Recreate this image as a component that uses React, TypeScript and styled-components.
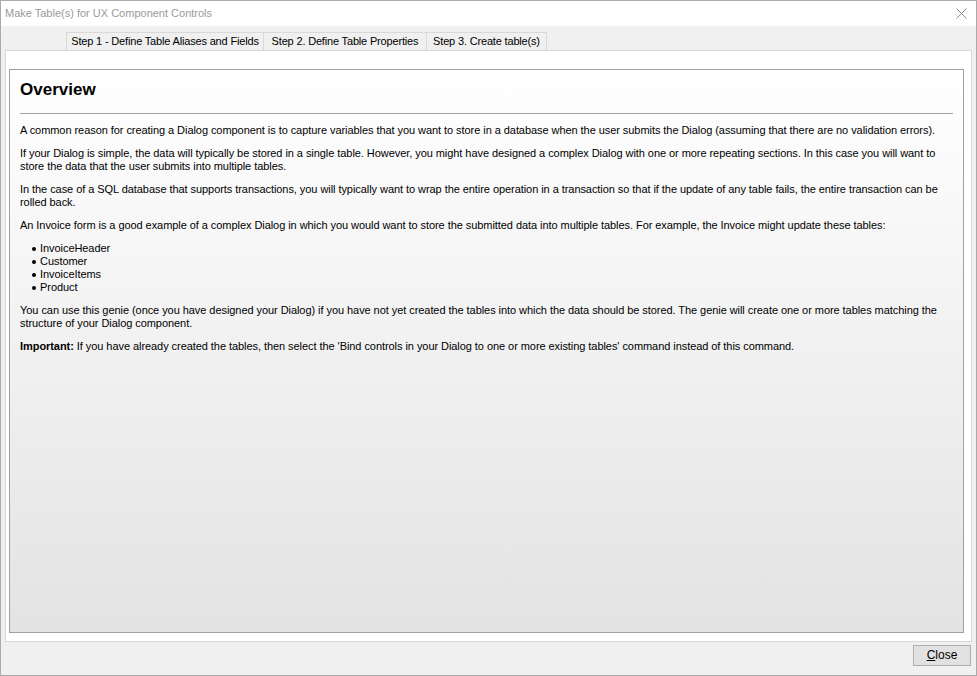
import React from "react";
import styled, { createGlobalStyle } from "styled-components";

const GlobalStyle = createGlobalStyle`
  html, body { margin: 0; padding: 0; background: #ffffff; }
  body { font-family: "Liberation Sans", Arial, sans-serif; font-size: 11px; color: #000; }
  * { box-sizing: border-box; }
`;

const Window = styled.div`
  width: 977px;
  height: 676px;
  border: 1px solid #aaaaaa;
  display: flex;
  flex-direction: column;
  background: #f0f0f0;
`;

const TitleBar = styled.div`
  height: 25px;
  background: #ffffff;
  display: flex;
  align-items: center;
  justify-content: space-between;
  padding: 0 9px 1px 4px;
`;

const TitleText = styled.span`
  font-size: 11px;
  color: #9a9a9a;
  line-height: 13px;
`;

const CloseX = styled.svg`
  width: 11px;
  height: 11px;
  display: block;
`;

const Body = styled.div`
  flex: 1;
  display: flex;
  flex-direction: column;
  padding: 6px 4px 0 4px;
  min-height: 0;
`;

const TabStrip = styled.div`
  display: flex;
  height: 18px;
  padding-left: 61px;
`;

const Tab = styled.div<{ $width: number }>`
  width: ${(p) => p.$width}px;
  height: 18px;
  border: 1px solid #d9d9d9;
  border-bottom: none;
  margin-left: -1px;
  background: #f0f0f0;
  font-size: 11px;
  letter-spacing: -0.17px;
  line-height: 17px;
  text-align: center;
  white-space: nowrap;
  &:first-child { margin-left: 0; }
`;

const Panel = styled.div`
  flex: 1;
  min-height: 0;
  background: #ffffff;
  border: 1px solid #d9d9d9;
  padding: 18px 7px 8px 3px;
  display: flex;
`;

const ContentBox = styled.div`
  flex: 1;
  border: 1px solid #a0a0a0;
  background: linear-gradient(to bottom, #ffffff 0%, #e3e3e3 100%);
  padding: 10px;
`;

const Heading = styled.h1`
  margin: 0;
  font-family: "Liberation Sans", Arial, sans-serif;
  font-size: 17px;
  font-weight: bold;
  line-height: 20px;
`;

const Rule = styled.hr`
  margin: 13px 0 10px 0;
  border: none;
  border-top: 1px solid #a0a0a0;
  height: 0;
`;

const Para = styled.p`
  margin: 0 0 10px 0;
  font-size: 11px;
  line-height: 13px;
  letter-spacing: -0.06px;
`;

const List = styled.ul`
  margin: 0 0 10px 0;
  padding: 0 0 0 12px;
  list-style: none;
`;

const Item = styled.li`
  display: flex;
  align-items: center;
  font-size: 11px;
  line-height: 13px;
  letter-spacing: -0.06px;
`;

const Dot = styled.span`
  width: 4px;
  height: 4px;
  border-radius: 50%;
  background: #000;
  margin-right: 4px;
  margin-top: 1px;
  flex: none;
`;

const Footer = styled.div`
  height: 33px;
  display: flex;
  justify-content: flex-end;
  align-items: flex-start;
  padding: 3px 1px 0 0;
`;

const Button = styled.button`
  width: 58px;
  height: 21px;
  background: #e1e1e1;
  border: 1px solid #adadad;
  font-family: "Liberation Sans", Arial, sans-serif;
  font-size: 12px;
  color: #000;
  padding: 0 0 1px 0;
  line-height: 16px;
  border-radius: 0;
`;

const Underline = styled.span`
  text-decoration: underline;
`;

const tabs = [
  { label: "Step 1 - Define Table Aliases and Fields", width: 198 },
  { label: "Step 2. Define Table Properties", width: 164 },
  { label: "Step 3. Create table(s)", width: 121 },
];

const items = ["InvoiceHeader", "Customer", "InvoiceItems", "Product"];

export default function App() {
  return (
    <>
      <GlobalStyle />
      <Window>
        <TitleBar>
          <TitleText>Make Table(s) for UX Component Controls</TitleText>
          <CloseX viewBox="0 0 11 11">
            <path d="M0.5 0.5 L10.5 10.5 M10.5 0.5 L0.5 10.5" stroke="#8a8a8a" strokeWidth="1" fill="none" />
          </CloseX>
        </TitleBar>
        <Body>
          <TabStrip>
            {tabs.map((t) => (
              <Tab key={t.label} $width={t.width}>
                {t.label}
              </Tab>
            ))}
          </TabStrip>
          <Panel>
            <ContentBox>
              <Heading>Overview</Heading>
              <Rule />
              <Para>
                A common reason for creating a Dialog component is to capture variables that you want to store in a
                database when the user submits the Dialog (assuming that there are no validation errors).
              </Para>
              <Para>
                If your Dialog is simple, the data will typically be stored in a single table. However, you might have
                designed a complex Dialog with one or more repeating sections. In this case you will want to store the
                data that the user submits into multiple tables.
              </Para>
              <Para>
                In the case of a SQL database that supports transactions, you will typically want to wrap the entire
                operation in a transaction so that if the update of any table fails, the entire transaction can be
                rolled back.
              </Para>
              <Para>
                An Invoice form is a good example of a complex Dialog in which you would want to store the submitted
                data into multiple tables. For example, the Invoice might update these tables:
              </Para>
              <List>
                {items.map((t) => (
                  <Item key={t}>
                    <Dot />
                    {t}
                  </Item>
                ))}
              </List>
              <Para>
                You can use this genie (once you have designed your Dialog) if you have not yet created the tables into
                which the data should be stored. The genie will create one or more tables matching the structure of
                your Dialog component.
              </Para>
              <Para>
                <b>Important:</b> If you have already created the tables, then select the 'Bind controls in your Dialog
                to one or more existing tables' command instead of this command.
              </Para>
            </ContentBox>
          </Panel>
          <Footer>
            <Button>
              <Underline>C</Underline>lose
            </Button>
          </Footer>
        </Body>
      </Window>
    </>
  );
}
